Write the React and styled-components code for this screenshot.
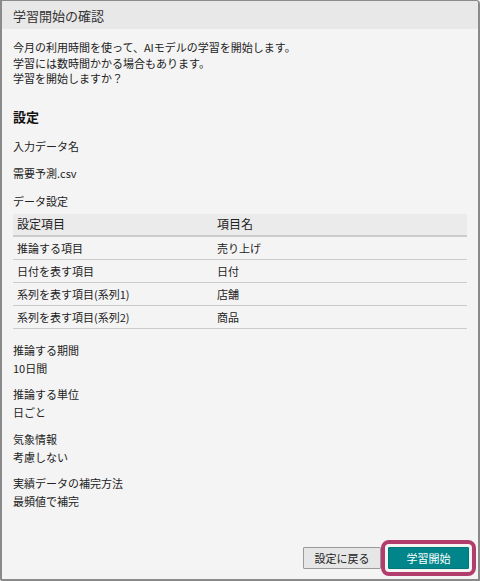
import React from "react";
import styled, { createGlobalStyle } from "styled-components";

const Global = createGlobalStyle`
  html, body { margin: 0; padding: 0; background: #f4f4f4; }
  body { font-family: "Noto Sans CJK JP", "Noto Sans", sans-serif; color: #222; }
  * { box-sizing: border-box; }
`;

const Dialog = styled.div`
  width: 480px;
  height: 581px;
  display: flex;
  flex-direction: column;
  background: #f4f4f4;
  border: 2px solid #8a8a8a;
  border-top-width: 1px;
  border-left-width: 2px;
  border-radius: 0 4px 0 2px;
  overflow: hidden;
`;

const Header = styled.div`
  height: 28px;
  flex: none;
  display: flex;
  align-items: center;
  padding: 0 11px;
  background: #e8e8e8;
  font-size: 13px;
  color: #333;
`;

const Body = styled.div`
  flex: 1;
  display: flex;
  flex-direction: column;
  padding: 11px 11px 0 11px;
`;

const Para = styled.p`
  margin: 0;
  font-size: 11px;
  line-height: 15.5px;
`;

const Heading = styled.div`
  margin-top: 21px;
  font-size: 13px;
  font-weight: bold;
  line-height: 18px;
  color: #111;
`;

const Label = styled.div`
  margin-top: ${(p) => p.$mt || 0}px;
  font-size: 11px;
  line-height: 16px;
`;

const Table = styled.div`
  margin-top: 5px;
  display: flex;
  flex-direction: column;
`;

const Row = styled.div`
  display: grid;
  grid-template-columns: 200px 1fr;
  height: ${(p) => (p.$head ? 23 : 23)}px;
  align-items: center;
  background: ${(p) => (p.$head ? "#ebebeb" : "transparent")};
  border-bottom: ${(p) => (p.$head ? 2 : 1)}px solid #cbcbcb;
  font-size: ${(p) => (p.$head ? 12 : 11)}px;
  padding-left: 4px;
`;

const Cell = styled.div`
  line-height: 16px;
`;

const Fields = styled.div`
  margin-top: 12px;
  display: flex;
  flex-direction: column;
  gap: 8.5px;
`;

const Field = styled.div`
  display: flex;
  flex-direction: column;
  font-size: 11px;
  line-height: 18px;
`;

const Footer = styled.div`
  margin-top: auto;
  display: flex;
  justify-content: flex-end;
  gap: 7px;
  padding: 0 9px 10px 0;
`;

const Button = styled.button`
  height: 22px;
  width: ${(p) => p.$w}px;
  padding: 0;
  font-family: inherit;
  font-size: 11px;
  border-radius: 1px;
  border: 1px solid ${(p) => (p.$primary ? "#00767a" : "#9a9a9a")};
  background: ${(p) => (p.$primary ? "#00868a" : "#e6e6e6")};
  color: ${(p) => (p.$primary ? "#fff" : "#222")};
  outline: ${(p) => (p.$primary ? "4px solid #b23c6b" : "none")};
  outline-offset: 3px;
`;

const rows = [
  ["推論する項目", "売り上げ"],
  ["日付を表す項目", "日付"],
  ["系列を表す項目(系列1)", "店舗"],
  ["系列を表す項目(系列2)", "商品"],
];

const fields = [
  ["推論する期間", "10日間"],
  ["推論する単位", "日ごと"],
  ["気象情報", "考慮しない"],
  ["実績データの補完方法", "最頻値で補完"],
];

export default function App() {
  return (
    <>
      <Global />
      <Dialog>
        <Header>学習開始の確認</Header>
        <Body>
          <Para>
            今月の利用時間を使って、AIモデルの学習を開始します。
            <br />
            学習には数時間かかる場合もあります。
            <br />
            学習を開始しますか？
          </Para>
          <Heading>設定</Heading>
          <Label $mt={12}>入力データ名</Label>
          <Label $mt={11}>需要予測.csv</Label>
          <Label $mt={12}>データ設定</Label>
          <Table>
            <Row $head>
              <Cell>設定項目</Cell>
              <Cell>項目名</Cell>
            </Row>
            {rows.map(([a, b]) => (
              <Row key={a}>
                <Cell>{a}</Cell>
                <Cell>{b}</Cell>
              </Row>
            ))}
          </Table>
          <Fields>
            {fields.map(([a, b]) => (
              <Field key={a}>
                <div>{a}</div>
                <div>{b}</div>
              </Field>
            ))}
          </Fields>
        </Body>
        <Footer>
          <Button $w={78}>設定に戻る</Button>
          <Button $w={81} $primary>学習開始</Button>
        </Footer>
      </Dialog>
    </>
  );
}
